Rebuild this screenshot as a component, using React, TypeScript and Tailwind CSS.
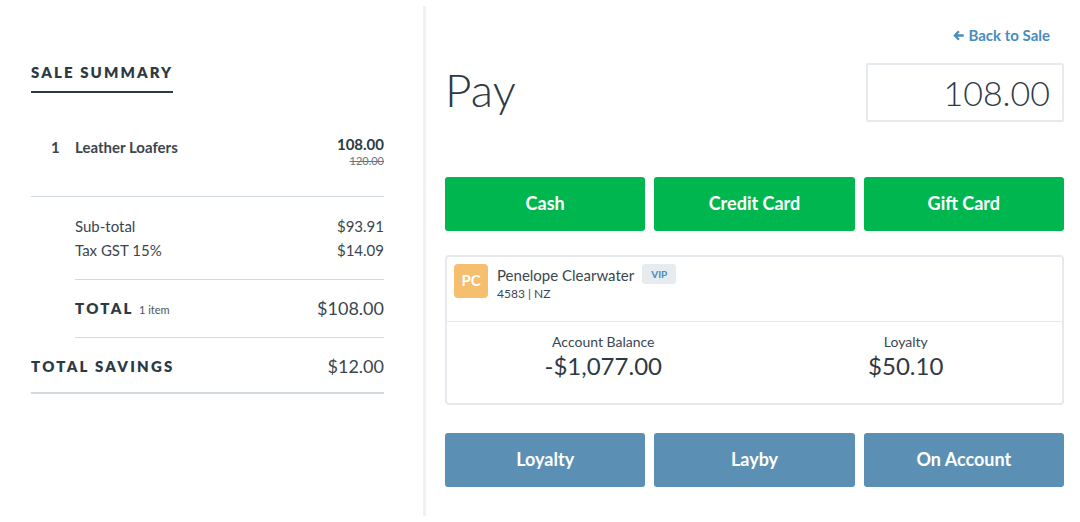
const lato = { fontFamily: "Lato, 'Open Sans', sans-serif" };

function SummaryRow({ label, value }: { label: string; value: string }) {
  return (
    <div className="flex items-center justify-between text-[15px] leading-6 text-[#3b4650]">
      <span>{label}</span>
      <span>{value}</span>
    </div>
  );
}

function PayButton({ label, tone }: { label: string; tone: "green" | "blue" }) {
  return (
    <button
      className={
        tone === "green"
          ? "h-[54px] flex-1 rounded-[3px] bg-[#00b74f] text-[18px] font-bold text-white"
          : "h-[54px] flex-1 rounded-[3px] bg-[#5b90b4] text-[18px] font-bold text-white"
      }
    >
      {label}
    </button>
  );
}

// Solid arrow, font-awesome style
function BackArrow() {
  return (
    <svg viewBox="0 0 14 14" className="h-[13px] w-[13px]" fill="currentColor">
      <path d="M6.6 1.6 L1.4 7 L6.6 12.4 L8.3 10.8 L5.9 8.3 H12.6 V5.7 H5.9 L8.3 3.2 Z" />
    </svg>
  );
}

export default function App() {
  return (
    <div style={lato} className="flex h-[522px] w-[1080px] bg-white text-[#2d3a45]">
      {/* Sale summary */}
      <div className="w-[423px] shrink-0 pl-[31px] pr-[39px] pt-[60px]">
        <div className="inline-block border-b-2 border-[#2d3a45] pb-[7px] text-[15px] font-extrabold tracking-[0.14em] text-[#2d3a45]">
          SALE SUMMARY
        </div>

        <div className="mt-[44px] flex items-start justify-between border-b border-[#d3dbe0] pb-[30px]">
          <div className="flex text-[15px] font-bold leading-5 text-[#3b4650]">
            <span className="w-[44px] pl-[20px]">1</span>
            <span>Leather Loafers</span>
          </div>
          <div className="text-right leading-none">
            <div className="text-[15px] font-bold text-[#2d3a45]">108.00</div>
            <div className="mt-[3px] text-[11px] text-[#6b757d] line-through">120.00</div>
          </div>
        </div>

        <div className="ml-[44px]">
          <div className="border-b border-[#d3dbe0] pb-[17px] pt-[17px]">
            <SummaryRow label="Sub-total" value="$93.91" />
            <SummaryRow label="Tax GST 15%" value="$14.09" />
          </div>
          <div className="flex h-[58px] items-center justify-between border-b border-[#d3dbe0]">
            <span className="text-[15px] font-extrabold tracking-[0.15em] text-[#2d3a45]">
              TOTAL <span className="text-[11px] font-normal tracking-normal text-[#4a555e]">1 item</span>
            </span>
            <span className="text-[18px] text-[#3b4650]">$108.00</span>
          </div>
        </div>
        <div className="flex h-[56px] items-center justify-between border-b-2 border-[#d3dbe0] pt-[3px]">
          <span className="text-[15px] font-extrabold tracking-[0.15em] text-[#2d3a45]">TOTAL SAVINGS</span>
          <span className="text-[18px] text-[#3b4650]">$12.00</span>
        </div>
      </div>

      {/* Divider */}
      <div className="my-[6px] w-[3px] shrink-0 bg-[#eef2f6]" />

      {/* Pay panel */}
      <div className="flex-1 pl-[19px] pr-[16px] pt-[24px]">
        <div className="flex justify-end pr-[14px]">
          <a className="flex items-center gap-[3px] text-[15px] font-bold text-[#4a8cbc]">
            <BackArrow />
            Back to Sale
          </a>
        </div>

        <div className="mt-[16px] flex items-center justify-between">
          <h1 className="pb-[4px] text-[46px] font-light leading-none text-[#2d3a45]">Pay</h1>
          <div className="flex h-[59px] w-[198px] items-center justify-end rounded-[2px] border-2 border-[#e6eaee] pr-[12px] text-[34px] font-light text-[#2d3a45]">
            108.00
          </div>
        </div>

        <div className="mt-[55px] flex gap-[9px]">
          <PayButton label="Cash" tone="green" />
          <PayButton label="Credit Card" tone="green" />
          <PayButton label="Gift Card" tone="green" />
        </div>

        <div className="mt-[24px] rounded-[4px] border-2 border-[#e6eaee]">
          <div className="flex h-[65px] items-start gap-[9px] border-b border-[#e6eaee] px-[7px] pt-[7px]">
            <div className="flex h-[34px] w-[34px] items-center justify-center rounded-[4px] bg-[#f6bf6f] text-[15px] font-bold text-white">
              PC
            </div>
            <div className="leading-none">
              <div className="flex items-center gap-[8px]">
                <span className="pt-[3px] text-[15px] text-[#3b4650]">Penelope Clearwater</span>
                <span className="rounded-[3px] bg-[#e5ebef] px-[9px] py-[5px] text-[10px] font-bold text-[#4a8cbc]">VIP</span>
              </div>
              <div className="mt-[4px] text-[12px] text-[#3b4650]">4583 | NZ</div>
            </div>
          </div>
          <div className="flex px-[5px] pb-[23px] pt-[10px]">
            <div className="flex-1 text-center">
              <div className="text-[14px] leading-5 text-[#3b4650]">Account Balance</div>
              <div className="text-[24px] leading-7 text-[#2d3a45]">-$1,077.00</div>
            </div>
            <div className="flex-1 text-center">
              <div className="text-[14px] leading-5 text-[#3b4650]">Loyalty</div>
              <div className="text-[24px] leading-7 text-[#2d3a45]">$50.10</div>
            </div>
          </div>
        </div>

        <div className="mt-[28px] flex gap-[9px]">
          <PayButton label="Loyalty" tone="blue" />
          <PayButton label="Layby" tone="blue" />
          <PayButton label="On Account" tone="blue" />
        </div>
      </div>
    </div>
  );
}
